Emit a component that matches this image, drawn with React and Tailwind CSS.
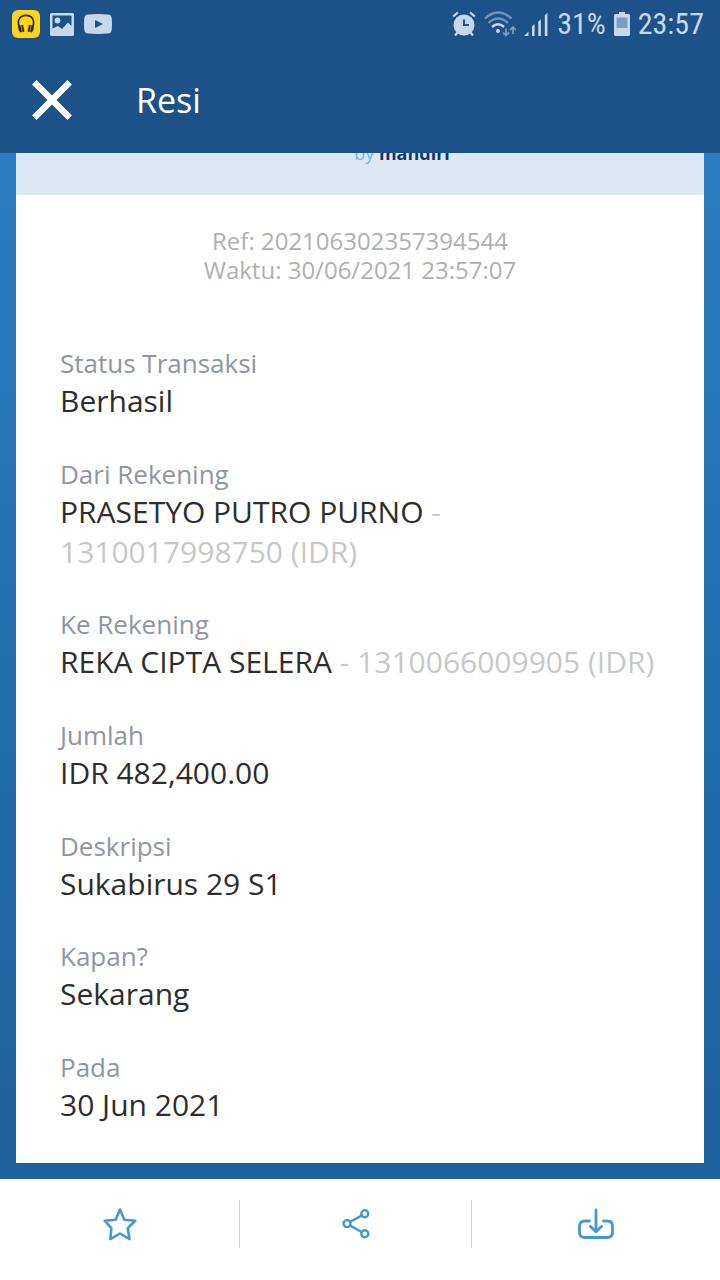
const details = [
  { label: "Status Transaksi", value: "Berhasil" },
  { label: "Dari Rekening", value: "PRASETYO PUTRO PURNO", account: "1310017998750 (IDR)" },
  { label: "Ke Rekening", value: "REKA CIPTA SELERA", account: "1310066009905 (IDR)" },
  { label: "Jumlah", value: "IDR 482,400.00" },
  { label: "Deskripsi", value: "Sukabirus 29 S1" },
  { label: "Kapan?", value: "Sekarang" },
  { label: "Pada", value: "30 Jun 2021" },
];

function HeadphonesIcon() {
  return (
    <svg width="28" height="28" viewBox="0 0 28 28" aria-hidden="true">
      <rect width="28" height="28" rx="6" fill="#fdd41e" />
      <path d="M7.200 17C4.800 10 8 5.400 14 5.400S23.200 10 20.800 17" fill="none" stroke="#2e2a15" strokeWidth="1.700" />
      <path d="M6.500 16l1.900-.6 1.300 6.400-1.600.4C6.800 20.500 6.200 18.200 6.500 16zM9.400 15.300l1.500-.3 1.300 6.500-1.600.4zM21.500 16l-1.900-.6-1.300 6.400 1.600.4c1.300-1.700 1.900-4 1.600-6.200zM18.600 15.300l-1.500-.3-1.300 6.500 1.600.4z" fill="#2e2a15" stroke="#2e2a15" strokeWidth=".4" />
    </svg>
  );
}

function PictureIcon() {
  return (
    <svg width="24" height="23" viewBox="0 0 24 23" aria-hidden="true">
      <path fill="#c7d8ea" fillRule="evenodd" d="M1.500 0h21A1.500 1.500 0 0 1 24 1.500v20a1.500 1.500 0 0 1-1.500 1.500h-21A1.500 1.500 0 0 1 0 21.500v-20A1.500 1.500 0 0 1 1.500 0zM2.500 2.500v13L8 13l4 3 6-6.500 3.500 3.500V2.500z" />
      <circle cx="7.500" cy="7.500" r="2.900" fill="#c7d8ea" />
    </svg>
  );
}

function VideoIcon() {
  return (
    <svg width="28" height="20" viewBox="0 0 28 20" aria-hidden="true">
      <path fill="#c7d8ea" d="M4 .4Q14-.4 24 .4q3.400.3 3.700 3.600.6 6 0 12-.3 3.300-3.700 3.600-10 .8-20 0Q.6 19.300.3 16q-.6-6 0-12Q.6.700 4 .4z" />
      <path d="M11 6v8l8-4z" fill="#1c5288" />
    </svg>
  );
}

function AlarmIcon() {
  return (
    <svg width="24" height="26" viewBox="0 0 24 26" aria-hidden="true">
      <circle cx="12" cy="14" r="10.500" fill="#c7d8ea" />
      <path d="M1.200 5.500 5.800 1.500M22.800 5.500 18.200 1.500M5.500 21.500 3 24.500M18.500 21.500 21 24.500" stroke="#c7d8ea" strokeWidth="2.300" />
      <path d="M12 8.500V14h5" fill="none" stroke="#1c5288" strokeWidth="2" />
    </svg>
  );
}

function WifiIcon() {
  return (
    <svg width="32" height="26" viewBox="0 0 32 26" fill="none" aria-hidden="true">
      <path d="M1 7.500Q14-4.500 27.500 7.500M4.500 12Q14 3 24 12" stroke="#6d94ba" strokeWidth="2.400" />
      <path d="M8 16q6-5.500 12 0" stroke="#c7d8ea" strokeWidth="2.600" />
      <circle cx="14" cy="20" r="2" fill="#c7d8ea" />
      <path d="M22 17.500v7m-3-3 3 3 3-3M29 23v-7m-3 3 3-3 3 3" stroke="#7299be" strokeWidth="1.800" />
    </svg>
  );
}

function SignalIcon() {
  return (
    <svg width="25" height="25" viewBox="0 0 25 25" fill="#c7d8ea" aria-hidden="true">
      <path d="M0 24l4.500-4.500V24zM8 24v-9.500l2.600-2.600V24zM14.300 24V9.800l2.600-2.600V24zM20.800 24V3.300L23.400.7V24z" />
    </svg>
  );
}

function BatteryIcon() {
  return (
    <svg width="16" height="24" viewBox="0 0 16 24" aria-hidden="true">
      <path d="M5 0h6v2h4l1 1v20l-1 1H1l-1-1V3l1-1h4z" fill="#c7d8ea" />
      <path d="M2.500 5.500h11V16h-11z" fill="#7a9dc1" />
    </svg>
  );
}

function CloseIcon() {
  return (
    <svg width="40" height="40" viewBox="0 0 40 40" aria-hidden="true">
      <path d="M2.300 2.300l35.400 35.400M37.700 2.300 2.300 37.700" stroke="#fff" strokeWidth="6.400" />
    </svg>
  );
}

function StarIcon() {
  return (
    <svg width="34" height="34" viewBox="0 0 34 34" fill="none" stroke="#4398d3" strokeWidth="2.600" strokeLinejoin="round" aria-hidden="true">
      <path d="M17 2.500l4.300 10.300 11 .9-7.600 7.500 1.900 10.900-9.600-5.600-9.600 5.600.9-10.900-6.600-7.500 11-.9z" />
    </svg>
  );
}

function ShareIcon() {
  return (
    <svg width="28" height="30" viewBox="0 0 28 30" fill="none" stroke="#4398d3" strokeWidth="2.400" aria-hidden="true">
      <circle cx="22.800" cy="4.800" r="3.500" />
      <circle cx="5" cy="14.600" r="3.500" />
      <circle cx="22.800" cy="24.800" r="3.500" />
      <path d="M8.200 12.800l11.400-6.200M8.200 16.600l11.400 6.400" />
    </svg>
  );
}

function DownloadIcon() {
  return (
    <svg width="36" height="32" viewBox="0 0 36 32" fill="none" stroke="#4398d3" strokeWidth="2.800" strokeLinecap="round" strokeLinejoin="round" aria-hidden="true">
      <path d="M11.500 13H7q-5.500 0-5.500 5v6.500q0 5 5.500 5h22q5.500 0 5.500-5V18q0-5-5.500-5h-3.500" />
      <path d="M18 2v21.500M12.500 18.500l5.500 5.200 5.500-5.200" />
    </svg>
  );
}

function Detail({ label, value, account }) {
  return (
    <div>
      <dt className="text-[26px] leading-9 text-[#8e96a1]">{label}</dt>
      <dd className="text-[30px] leading-10 text-[#2d2d2d]">
        {value}
        {account && <span className="text-[#c8c8c8]"> - {account}</span>}
      </dd>
    </div>
  );
}

export default function App() {
  return (
    <div className="flex min-h-screen flex-col bg-white font-['Open_Sans',sans-serif]">
      <header className="bg-[#1c5288] text-white">
        <div className="flex h-12 items-center justify-between pl-3 pr-4 font-['Roboto_Condensed','Roboto',sans-serif] text-[#c7d8ea]">
          <div className="flex items-center gap-2.5">
            <HeadphonesIcon />
            <PictureIcon />
            <VideoIcon />
          </div>
          <div className="flex items-center gap-2 text-[30px] leading-8">
            <AlarmIcon />
            <WifiIcon />
            <SignalIcon />
            <span>31%</span>
            <BatteryIcon />
            <time>23:57</time>
          </div>
        </div>
        <div className="flex h-[105px] items-center gap-16 px-8 pb-0.5">
          <button type="button" aria-label="Tutup">
            <CloseIcon />
          </button>
          <h1 className="text-[34px] leading-10">Resi</h1>
        </div>
      </header>

      <main className="flex grow flex-col bg-linear-to-b from-[#2c7dc3] via-[#236fae] to-[#1d619d] px-4 pb-4">
        <article className="flex grow flex-col bg-white">
          <div className="flex h-[42px] justify-center overflow-hidden bg-[#dbe8f3]">
            <p className="-mt-3 pl-[84px] text-[18px] leading-6 text-[#75b7e4]">
              by <b className="font-bold text-[#12365f]">mandiri</b>
            </p>
          </div>
          <p className="pt-[31px] text-center text-[24px] leading-[29px] text-[#b0b0b0]">
            Ref: 202106302357394544
            <br />
            Waktu: 30/06/2021 23:57:07
          </p>
          <dl className="flex grow flex-col justify-between px-11 pb-[38px] pt-[61px]">
            {details.map((item) => (
              <Detail key={item.label} {...item} />
            ))}
          </dl>
        </article>
      </main>

      <footer className="grid h-[101px] grid-cols-[30fr_29fr_31fr] content-center pb-3">
        <button type="button" aria-label="Favorit" className="flex h-12 items-center justify-center border-r border-[#d2d2d2]">
          <StarIcon />
        </button>
        <button type="button" aria-label="Bagikan" className="flex h-12 items-center justify-center border-r border-[#d2d2d2]">
          <ShareIcon />
        </button>
        <button type="button" aria-label="Unduh" className="flex h-12 items-center justify-center">
          <DownloadIcon />
        </button>
      </footer>
    </div>
  );
}
